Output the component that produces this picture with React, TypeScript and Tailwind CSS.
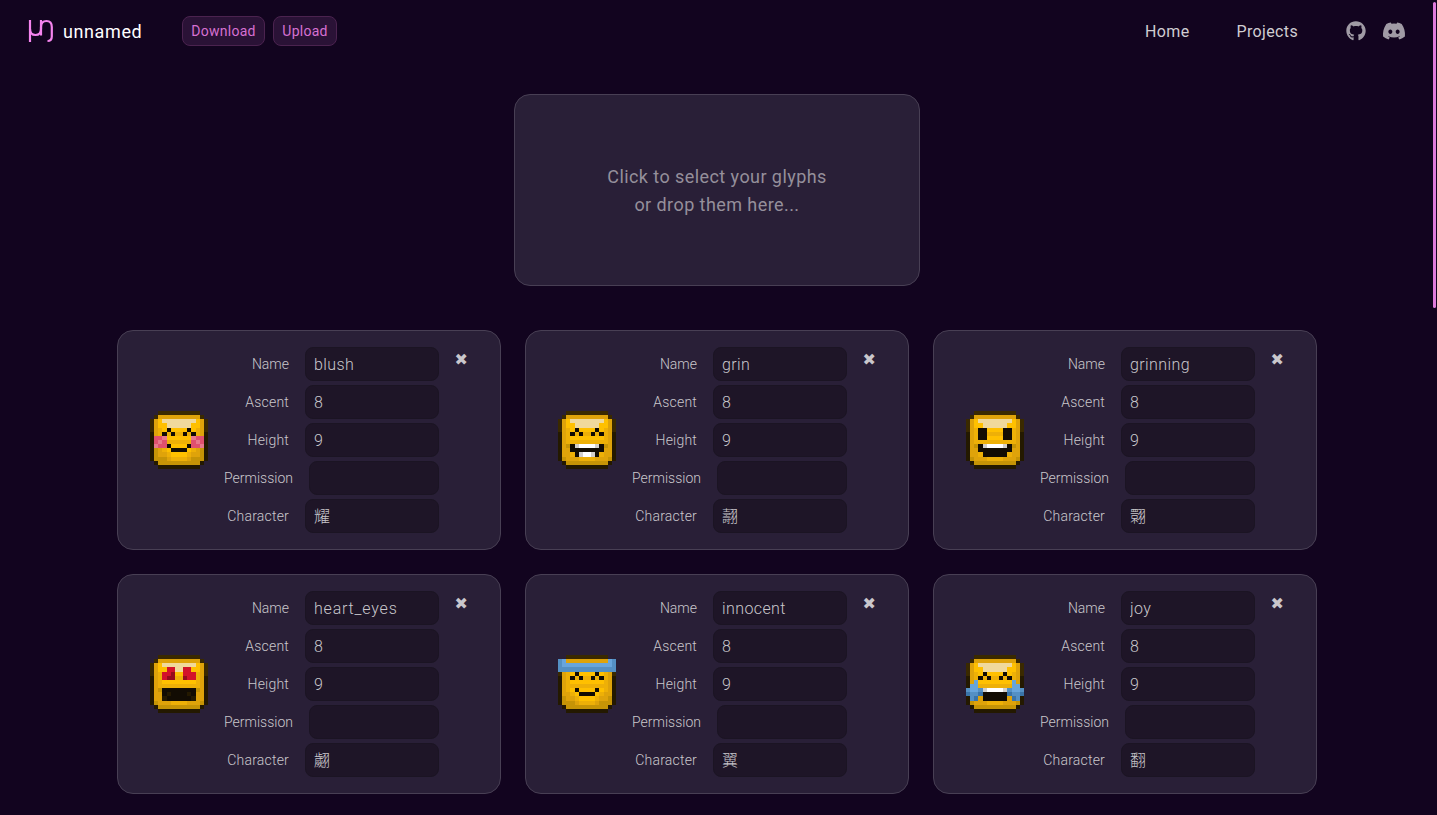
import { FaDiscord, FaGithub } from "react-icons/fa";

const PALETTE: Record<string, string> = {
  K: "#3a2900",
  k: "#241900",
  D: "#dfa30a",
  E: "#eeb007",
  Y: "#ffc000",
  G: "#c69406",
  C: "#f0d99c",
  B: "#120c03",
  P: "#e0506e",
  p: "#e8788c",
  W: "#ffffff",
  w: "#d2cfcb",
  R: "#d3122a",
  r: "#960c1c",
  b: "#68a5dc",
  u: "#5490c4",
  n: "#3a74a8",
};

const SPRITES: Record<string, string[]> = {
  blush: [
    "..KKKKKKKKKK..",
    ".KDDDDDDDDDDK.",
    "KDYCCCCCCCCYDK",
    "KDYYCCCCCCYYDK",
    "KDEYBYYYYBYEDK",
    "kDEBEBEEBEBEDk",
    "kPPpYYYYYYpPPk",
    "kPpPEEEEEEPpPk",
    "kpPPBYYYYBPPpk",
    "kGDEYBBBBYEDGk",
    "kGDDEYYYYEDDGk",
    "kGGGDEEEEDGGGk",
    ".kGGGGGGGGGGk.",
    "..kkkkkkkkkk..",
  ],
  grin: [
    "..KKKKKKKKKK..",
    ".KDDDDDDDDDDK.",
    "KDYCCCCCCCCYDK",
    "KDYYCCCCCCYYDK",
    "KDEYBYYYYBYEDK",
    "kDEBEBEEBEBEDk",
    "kDEYYYYYYYYEDk",
    "kDEEEEEEEEEEDk",
    "kDGBwWWWWwBGDk",
    "kDDBBBBBBBBDDk",
    "kDDEBwWWwBEDDk",
    "kGDDDEEEEDDDGk",
    ".kGGGGGGGGGGk.",
    "..kkkkkkkkkk..",
  ],
  grinning: [
    "..KKKKKKKKKK..",
    ".KDDDDDDDDDDK.",
    "KDYCCCCCCCCYDK",
    "KDYYCCCCCCYYDK",
    "KDEBBYYYYBBEDK",
    "kDEBBEEEEBBEDk",
    "kDEBBYYYYBBEDk",
    "kDEEEEEEEEEEDk",
    "kDGBwWWWWwBGDk",
    "kDDBBBBBBBBDDk",
    "kDDEBBBBBBEDDk",
    "kGDDDEEEEDDDGk",
    ".kGGGGGGGGGGk.",
    "..kkkkkkkkkk..",
  ],
  heart_eyes: [
    "..KKKKKKKKKK..",
    ".KDDDDDDDDDDK.",
    "KDYCCCCCCCCYDK",
    "KDYYRRCCRRYYDK",
    "KDERRrYYRRREDK",
    "kDERrrEErRREDk",
    "kDEYYYYYYYYEDk",
    "kDEEEEEEEEEEDk",
    "kDGBBBBBBBBGDk",
    "kDDBkBBBBkBDDk",
    "kDDkBBBBBBkDDk",
    "kGDDDEEEEDDDGk",
    ".kGGGGGGGGGGk.",
    "..kkkkkkkkkk..",
  ],
  innocent: [
    "..KKKKKKKKKK..",
    "ubDDDDDDDDDDbu",
    "ubbbbbbbbbbbbu",
    "uuuuuuuuuuuuuu",
    "KDEYBYYYYBYEDK",
    "kDEBEBEEBEBEDk",
    "kDEYYYYYYYYEDk",
    "kDEEEEEEEEEEDk",
    "kDEYBYYYYBYEDk",
    "kDDEYBBBBYEDDk",
    "kGDDEYYYYEDDGk",
    "kGGGDEEEEDGGGk",
    ".kGGGGGGGGGGk.",
    "..kkkkkkkkkk..",
  ],
  joy: [
    "..KKKKKKKKKK..",
    ".KDDDDDDDDDDK.",
    "KDYCCCCCCCCYDK",
    "KDYYCCCCCCYYDK",
    "KDEYBYYYYBYEDK",
    "kDEBEBEEBEBEDk",
    "kDbYYYYYYYYbDk",
    "kbbEEEEEEEEbbk",
    "ubbuwWWWWwubbu",
    "nuunBBBBBBnuun",
    "kunDBBBBBBDnuk",
    "kGDDDEEEEDDDGk",
    ".kGGGGGGGGGGk.",
    "..kkkkkkkkkk..",
  ],
};

const GLYPHS = [
  { name: "blush", character: "耀" },
  { name: "grin", character: "翿" },
  { name: "grinning", character: "翾" },
  { name: "heart_eyes", character: "翽" },
  { name: "innocent", character: "翼" },
  { name: "joy", character: "翻" },
];

function Sprite({ name }: { name: string }) {
  return (
    <svg viewBox="0 0 14 14" shapeRendering="crispEdges" className="size-[58px] shrink-0">
      {SPRITES[name].flatMap((row, y) =>
        [...row].map((c, x) =>
          c === "." ? null : <rect key={`${x}-${y}`} x={x} y={y} width={1} height={1} fill={PALETTE[c]} />,
        ),
      )}
    </svg>
  );
}

type FieldProps = { label: string; value: string; labelClass?: string; inputClass?: string };

function Field({ label, value, labelClass = "tracking-[0.2px]", inputClass = "tracking-[0.4px]" }: FieldProps) {
  return (
    <label className="flex h-[34px] items-center justify-end gap-4">
      <span className={`whitespace-nowrap text-sm font-light text-[#c9c7cc] ${labelClass}`}>{label}</span>
      <input
        readOnly
        value={value}
        className={`h-[34px] w-[134px] min-w-0 rounded-lg border border-[#1b1423] bg-[#1e1527] px-2 text-base font-light text-[#c9c7cc] outline-none ${inputClass}`}
      />
    </label>
  );
}

function GlyphCard({ name, character }: { name: string; character: string }) {
  return (
    <article className="flex h-[220px] gap-4 rounded-2xl border border-[#483f54] bg-[#291f37] px-8 py-4">
      <div className="flex items-center">
        <Sprite name={name} />
      </div>
      <div className="flex w-[215px] flex-col gap-1">
        <Field
          label="Name"
          value={name}
          labelClass="tracking-normal"
          inputClass={name.includes("_") ? "tracking-[0.8px]" : "tracking-[0.4px]"}
        />
        <Field label="Ascent" value="8" />
        <Field label="Height" value="9" />
        <Field label="Permission" value="" labelClass="w-[69px]" />
        <Field label="Character" value={character} inputClass="pb-0.5" />
      </div>
      <button className="-ml-[0.500px] h-[25px] pt-px font-['DejaVu_Sans'] text-base leading-6 text-[#c9c7cc]">✖</button>
    </article>
  );
}

function Logo() {
  return (
    <svg width="26" height="24" viewBox="0 0 26 24" fill="none" stroke="#f584ee" strokeWidth="2.200">
      <path d="M2 1v22" />
      <path d="M2 10c0 4.500 2 6 5.500 6s5.500-1.500 5.500-6V1" />
      <path d="M13 16.500V8c0-4 1.500-6 5.500-6S23.800 4 23.800 8v9.500c0 3-1.500 4.500-4.300 4.500" />
    </svg>
  );
}

export default function App() {
  return (
    <div className="relative h-[815px] overflow-hidden bg-[#12041f] font-[Roboto,'Noto_Sans_CJK_JP',sans-serif]">
      <header className="flex h-[62px] items-center justify-between pl-7 pr-[31px]">
        <div className="flex items-center">
          <Logo />
          <span className="ml-[9px] w-20 pt-0.5 text-lg tracking-[0.6px] text-white">unnamed</span>
          <div className="ml-[39px] flex gap-2 text-sm tracking-[0.25px] text-[#d670d1]">
            <button className="h-[30px] w-[83px] rounded-lg border border-[#4b234f] bg-[#2a1236]">Download</button>
            <button className="h-[30px] w-16 rounded-lg border border-[#4b234f] bg-[#2a1236]">Upload</button>
          </div>
        </div>
        <nav className="flex items-center text-base tracking-[0.35px] text-[#d0cdd2]">
          <a className="mr-[47px] pt-0.5">Home</a>
          <a className="mr-12 pt-0.5">Projects</a>
          <FaGithub className="mr-4 size-5 text-[#a09ba5]" />
          <FaDiscord className="size-6 text-[#a09ba5]" />
        </nav>
      </header>
      <main className="flex w-[1434px] flex-col items-center pt-8">
        <div className="flex h-48 w-[406px] items-center justify-center rounded-2xl border border-[#483f54] bg-[#291f37] pt-0.5 text-center text-lg leading-7 tracking-[0.43px] text-[#958f9b]">
          <p>
            Click to select your glyphs
            <br />
            or drop them here...
          </p>
        </div>
        <section className="mt-11 grid grid-cols-[384px_384px_384px] gap-6">
          {GLYPHS.map((glyph) => (
            <GlyphCard key={glyph.name} {...glyph} />
          ))}
        </section>
      </main>
      <div className="absolute right-px top-0.5 h-[306px] w-[3px] rounded-full bg-[#e07bdb]" />
    </div>
  );
}
